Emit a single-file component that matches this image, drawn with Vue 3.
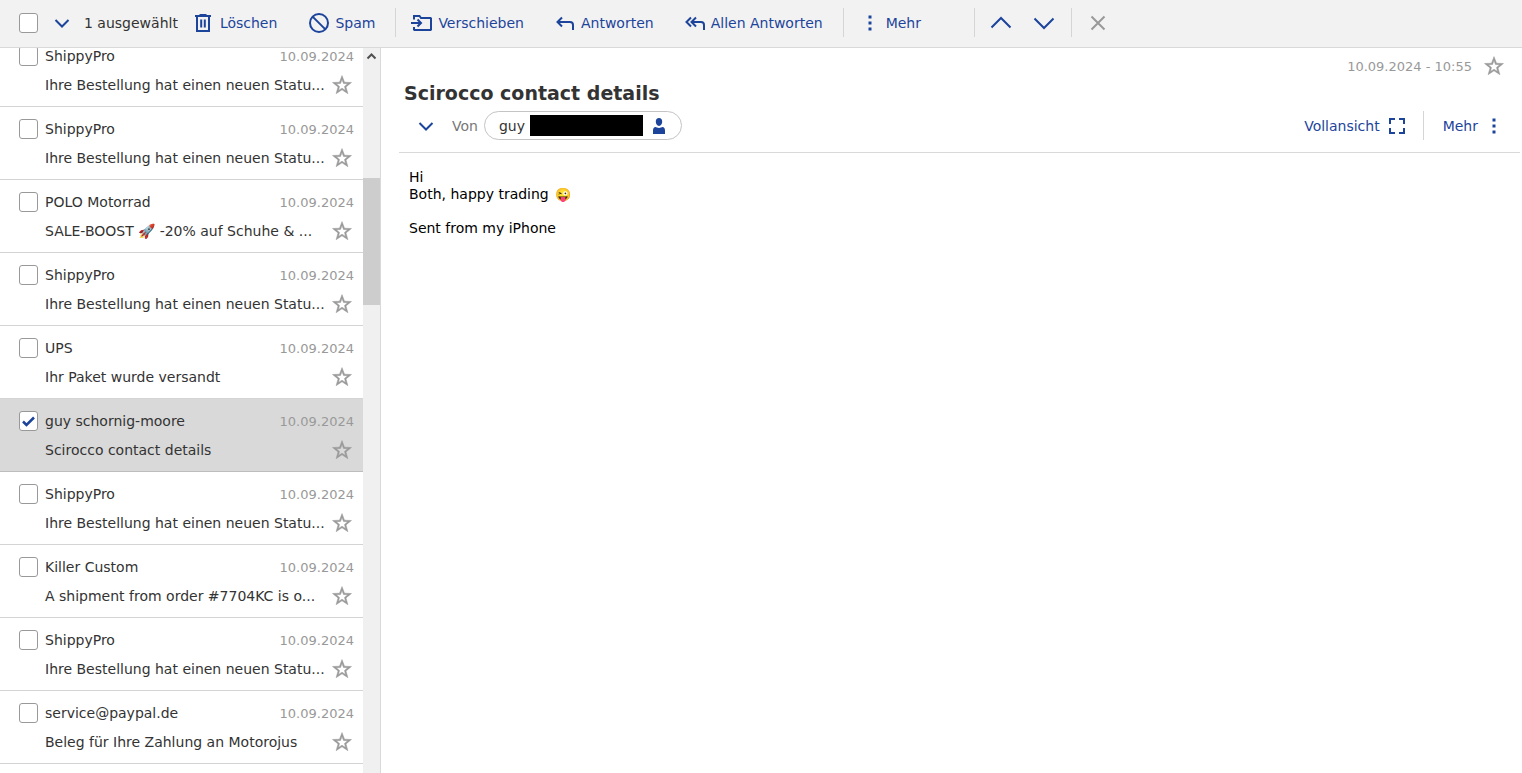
<template>
  <div class="mail">
    <header class="toolbar">
      <input v-model="allSelected" type="checkbox" class="check" aria-label="Alle auswählen" />
      <button class="select-menu" aria-label="Auswahl">
        <svg class="icon" viewBox="0 0 24 24"><path d="M5.5 9 12 15.5 18.5 9" /></svg>
      </button>
      <span class="selected-count">{{ selectedCount }} ausgewählt</span>
      <button class="tool tool-delete">
        <svg class="icon" viewBox="0 0 24 24">
          <path d="M4 5h16M8.5 4h7M6 5v15h12V5M10.2 8.5v8M13.8 8.5v8" />
        </svg>
        Löschen
      </button>
      <button class="tool">
        <svg class="icon" viewBox="0 0 24 24">
          <circle cx="12" cy="12" r="9" />
          <path d="m5.6 5.6 12.8 12.8" />
        </svg>
        Spam
      </button>
      <span class="divider"></span>
      <button class="tool">
        <svg class="icon" viewBox="0 0 24 24">
          <path d="M4 8.5V5h5.5L11 7h9.5l.5.5v11l-.5.5h-16l-.5-.5V16M1 12h10M7.5 8.5 11 12l-3.5 3.5" />
        </svg>
        Verschieben
      </button>
      <button class="tool">
        <svg class="icon" viewBox="0 0 24 24"><path d="M9 6.5 4.5 11 9 15.5M4.5 11H17q3 0 3 3v5" /></svg>
        Antworten
      </button>
      <button class="tool">
        <svg class="icon" viewBox="0 0 24 24">
          <path d="M8 6.5 3.5 11 8 15.5M13 6.5 8.5 11l4.5 4.5M8.5 11H18q3 0 3 3v5" />
        </svg>
        Allen Antworten
      </button>
      <span class="divider"></span>
      <button class="tool tool-more">
        <svg class="icon dots" viewBox="0 0 24 24"><path :d="dotsPath" /></svg>
        Mehr
      </button>
      <span class="divider"></span>
      <div class="nav-group">
        <button class="nav-btn" aria-label="Vorherige E-Mail">
          <svg class="icon" viewBox="0 0 24 24"><path d="m2.5 16.5 9.5-9.5 9.5 9.5" /></svg>
        </button>
        <button class="nav-btn" aria-label="Nächste E-Mail">
          <svg class="icon" viewBox="0 0 24 24"><path d="m2.5 7.5 9.5 9.5 9.5-9.5" /></svg>
        </button>
      </div>
      <span class="divider"></span>
      <div class="nav-group">
        <button class="nav-btn nav-close" aria-label="Schließen">
          <svg class="icon" viewBox="0 0 24 24"><path d="m5.5 5.5 13 13M18.5 5.5l-13 13" /></svg>
        </button>
      </div>
    </header>

    <div class="content">
      <aside class="sidebar">
        <ul ref="listEl" class="list">
          <li v-for="m in mails" :key="m.id" class="row" :class="{ selected: m.checked }">
            <input :id="'mail-' + m.id" v-model="m.checked" type="checkbox" class="check" />
            <label class="sender" :for="'mail-' + m.id">{{ m.sender }}</label>
            <span class="date">10.09.2024</span>
            <span class="subject">{{ m.subject }}</span>
            <button class="star" aria-label="Markieren">
              <svg viewBox="0 0 20 20"><path :d="starPath" /></svg>
            </button>
          </li>
        </ul>
        <div class="scrollbar">
          <button class="scroll-up" aria-label="Nach oben" @click="scrollUp">
            <svg viewBox="0 0 17 17"><path d="m4.5 10.5 4-4 4 4" /></svg>
          </button>
          <span class="track-before"></span>
          <span class="thumb"></span>
          <span class="track-after"></span>
        </div>
      </aside>

      <main class="message">
        <div class="message-date">
          <span>10.09.2024 - 10:55</span>
          <button class="star" aria-label="Markieren">
            <svg viewBox="0 0 20 20"><path :d="starPath" /></svg>
          </button>
        </div>
        <h1 class="title">Scirocco contact details</h1>
        <div class="meta">
          <button class="details-toggle" aria-label="Details">
            <svg class="icon" viewBox="0 0 24 24"><path d="M5.5 9 12 15.5 18.5 9" /></svg>
          </button>
          <span class="from-label">Von</span>
          <button class="contact">
            guy
            <span class="redacted"></span>
            <svg class="person" viewBox="0 0 12 16">
              <path d="M6 0c2 0 3.2 1.2 3.2 3.5S8 8 6 8 2.8 5.8 2.8 3.5 4 0 6 0zM2.5 9C3.3 9 4.5 10 6 10s2.7-1 3.5-1C11 9 12 10.5 12 12.5V16H0v-3.5C0 10.5 1 9 2.5 9z" />
            </svg>
          </button>
          <div class="meta-actions">
            <button class="link-btn">
              Vollansicht
              <svg class="full" viewBox="0 0 16 16">
                <path d="M1 6V1h5M10 1h5v5M15 10v5h-5M6 15H1v-5" />
              </svg>
            </button>
            <span class="divider"></span>
            <button class="link-btn link-more">
              Mehr
              <svg class="icon dots" viewBox="0 0 24 24"><path :d="dotsPath" /></svg>
            </button>
          </div>
        </div>
        <div class="body">
          <div>Hi</div>
          <div>Both, happy trading <span class="emoji">😜</span></div>
          <br />
          <div>Sent from my iPhone</div>
        </div>
      </main>
    </div>
  </div>
</template>

<script setup>
import { ref, computed, onMounted } from 'vue'

const starPath =
  'M10 .6 12.5 7.2 19.5 7.5 14 11.9 15.9 18.7 10 14.8 4.1 18.7 6 11.9 .5 7.5 7.5 7.2z' +
  'M10 4.6 11.5 8.5 15.7 8.8 12.5 11.4 13.5 15.4 10 13.2 6.5 15.4 7.5 11.4 4.3 8.8 8.5 8.5z'
const dotsPath = 'M10.5 4.5h3v3h-3zM10.5 10.5h3v3h-3zM10.5 16.5h3v3h-3z'

const statusSubject = 'Ihre Bestellung hat einen neuen Statu...'

const mails = ref([
  { id: 1, sender: 'ShippyPro', subject: statusSubject, checked: false },
  { id: 2, sender: 'ShippyPro', subject: statusSubject, checked: false },
  { id: 3, sender: 'POLO Motorrad', subject: 'SALE-BOOST 🚀 -20% auf Schuhe & ...', checked: false },
  { id: 4, sender: 'ShippyPro', subject: statusSubject, checked: false },
  { id: 5, sender: 'UPS', subject: 'Ihr Paket wurde versandt', checked: false },
  { id: 6, sender: 'guy schornig-moore', subject: 'Scirocco contact details', checked: true },
  { id: 7, sender: 'ShippyPro', subject: statusSubject, checked: false },
  { id: 8, sender: 'Killer Custom', subject: 'A shipment from order #7704KC is o...', checked: false },
  { id: 9, sender: 'ShippyPro', subject: statusSubject, checked: false },
  { id: 10, sender: 'service@paypal.de', subject: 'Beleg für Ihre Zahlung an Motorojus', checked: false },
])

const listEl = ref(null)

const selectedCount = computed(() => mails.value.filter(m => m.checked).length)

const allSelected = computed({
  get: () => mails.value.every(m => m.checked),
  set: value => mails.value.forEach(m => { m.checked = value }),
})

function scrollUp() {
  listEl.value.scrollTop -= 40
}

onMounted(() => {
  listEl.value.scrollTop = 14
})
</script>

<style>
body {
  margin: 0;
}
</style>

<style scoped>
.mail {
  display: flex;
  flex-direction: column;
  height: 100vh;
  overflow: hidden;
  background: #fff;
  color: #333;
  font-family: Verdana, "DejaVu Sans", sans-serif;
  font-size: 14px;
}

button {
  display: flex;
  align-items: center;
  padding: 0;
  border: none;
  background: none;
  color: #1c449b;
  font: inherit;
  white-space: nowrap;
  cursor: pointer;
}

svg {
  display: block;
  flex: none;
  fill: none;
  stroke: currentColor;
  stroke-width: 2;
}

.icon {
  width: 24px;
  height: 24px;
}

.dots,
.person {
  fill: currentColor;
  stroke: none;
}

.check {
  appearance: none;
  flex: none;
  box-sizing: border-box;
  width: 19px;
  height: 20px;
  margin: 0;
  border: 1px solid #999;
  border-radius: 3px;
  background: #fff;
}

.check:checked {
  background: #fff url("data:image/svg+xml,%3Csvg xmlns='http://www.w3.org/2000/svg' viewBox='0 0 17 18'%3E%3Cpath d='M3 9.5 6.5 13 14 5.5' fill='none' stroke='%231c449b' stroke-width='2.5'/%3E%3C/svg%3E") center / 17px 18px no-repeat;
}

.toolbar {
  display: flex;
  align-items: center;
  flex: none;
  height: 45px;
  padding: 0 0 2px 19px;
  border-bottom: 1px solid #d9d9d9;
  background: #f2f2f2;
}

.select-menu {
  margin: 0 10px 0 12px;
}

.tool {
  gap: 4px;
  height: 30px;
  padding: 0 15px 0 14px;
}

.tool-delete {
  gap: 5px;
  padding: 0 16px 0 13px;
}

.tool-more {
  margin-right: 33px;
}

.divider {
  flex: none;
  width: 1px;
  height: 29px;
  background: #d5d5d5;
}

.toolbar .divider {
  margin-left: 5px;
}

.nav-group {
  display: flex;
  margin-left: 5px;
}

.nav-btn {
  justify-content: center;
  width: 43px;
}

.nav-close {
  color: #999;
}

.content {
  display: flex;
  flex: 1;
  min-height: 0;
}

.sidebar {
  display: flex;
  flex: none;
  width: 380px;
  border-right: 1px solid #d9d9d9;
}

.list {
  flex: 1;
  min-width: 0;
  margin: 0;
  padding: 0 0 72px;
  overflow: hidden;
  list-style: none;
}

.row {
  display: grid;
  grid-template-columns: 26px 1fr auto;
  grid-template-rows: 30px 28px;
  align-items: center;
  padding: 7px 9px 7px 19px;
  border-bottom: 1px solid #d4d4d4;
}

.row.selected {
  border-bottom-color: #bdbdbd;
  background: #d9d9d9;
}

.date {
  color: #999;
  font-size: 13px;
}

.subject {
  grid-column: 2 / 4;
  grid-row: 2;
  line-height: 16px;
  white-space: nowrap;
}

.star {
  color: #999;
}

.star svg {
  width: 20px;
  height: 20px;
  fill: currentColor;
  fill-rule: evenodd;
  stroke-width: 0.5;
}

.row .star {
  grid-column: 3;
  grid-row: 2;
  justify-self: end;
  margin-right: 2px;
}

.scrollbar {
  display: flex;
  flex-direction: column;
  flex: none;
  width: 17px;
  background: #f0f0f0;
}

.scroll-up {
  height: 17px;
  color: #505050;
}

.scroll-up svg {
  width: 17px;
  height: 17px;
}

.track-before {
  flex: 113;
}

.thumb {
  flex: 127;
  background: #cdcdcd;
}

.track-after {
  flex: 468;
}

.message {
  flex: 1;
  min-width: 0;
  padding: 8px 2px 0 18px;
}

.message-date {
  display: flex;
  align-items: center;
  justify-content: flex-end;
  gap: 12px;
  height: 20px;
  padding-right: 16px;
  color: #999;
  font-size: 13px;
}

.title {
  margin: 5px 0 5px 5px;
  font-size: 19px;
  line-height: 24px;
}

.meta {
  display: flex;
  align-items: center;
  height: 31px;
  padding: 0 14px 11px 15px;
  border-bottom: 1px solid #d9d9d9;
}

.from-label {
  margin: 0 6px 0 14px;
  color: #777;
}

.contact {
  box-sizing: border-box;
  height: 29px;
  padding: 0 16px 0 14px;
  border: 1px solid #c4c4c4;
  border-radius: 15px;
  color: #333;
}

.redacted {
  width: 113px;
  height: 21px;
  margin: 0 10px 0 5px;
  background: #000;
}

.person {
  width: 12px;
  height: 16px;
  color: #1c449b;
}

.meta-actions {
  display: flex;
  align-items: center;
  margin-left: auto;
}

.link-btn {
  gap: 9px;
}

.full {
  width: 16px;
  height: 16px;
}

.meta-actions .divider {
  margin: 0 19px 0 18px;
}

.link-more {
  gap: 4px;
}

.body {
  padding: 16px 10px;
  color: #000;
  line-height: 17px;
}

.emoji {
  margin-left: 2px;
  font-family: "Noto Color Emoji", "Segoe UI Emoji", sans-serif;
  font-size: 13px;
  line-height: 16px;
}
</style>
